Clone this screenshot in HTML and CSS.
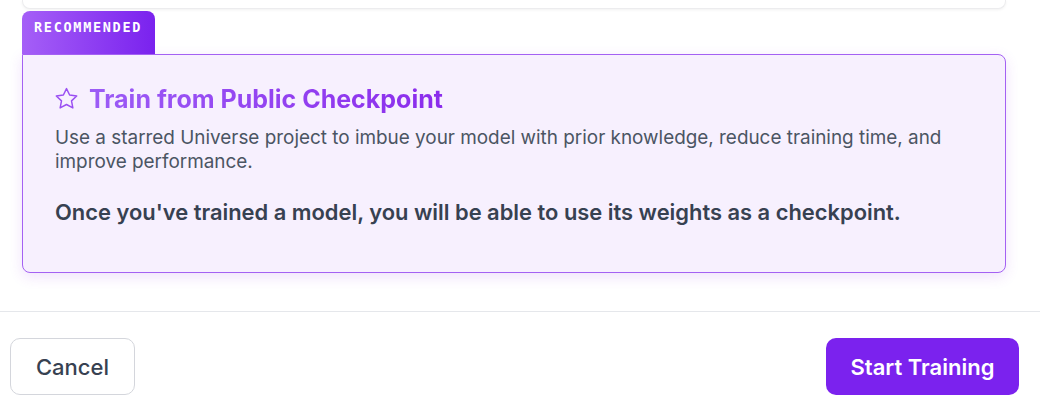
FILE: index.html
```html
<!DOCTYPE html>
<html lang="en">
<head>
    <meta charset="UTF-8">
    <meta name="viewport" content="width=device-width, initial-scale=1.0">
    <title>Start Training</title>
    <link rel="stylesheet" href="styles.css">
</head>
<body>
    <div class="options">
        <div class="prev-card"></div>

        <div class="option recommended">
            <div class="tab">RECOMMENDED</div>
            <div class="card">
                <div class="card-title">
                    <svg class="star" width="25" height="25" viewBox="0 0 24 24" fill="none" stroke="currentColor" stroke-width="1.4" stroke-linejoin="round">
                        <path d="M12 1.5l3 6.2 6.8.9-5 4.7 1.3 6.8L12 16.8l-6.1 3.3 1.3-6.8-5-4.7 6.8-.9z"/>
                    </svg>
                    <h2>Train from Public Checkpoint</h2>
                </div>
                <p class="desc">Use a starred Universe project to imbue your model with prior knowledge, reduce training time, and improve performance.</p>
                <p class="note">Once you've trained a model, you will be able to use its weights as a checkpoint.</p>
            </div>
        </div>
    </div>

    <div class="footer">
        <button class="btn btn-cancel">Cancel</button>
        <button class="btn btn-primary">Start Training</button>
    </div>
</body>
</html>
```

FILE: styles.css
```css
body {
    margin: 0;
    font-family: Inter, "Noto Sans", sans-serif;
    background-color: #fff;
    color: #374151;
}
.options {
    padding: 0 34px 0 22px;
    height: 312px;
    box-sizing: border-box;
    border-bottom: 1px solid #e5e7eb;
}
.prev-card {
    height: 9px;
    background: #fff;
    border: 1px solid #ececee;
    border-top: none;
    border-radius: 0 0 8px 8px;
    box-shadow: 0 1px 3px rgba(0, 0, 0, 0.06);
    box-sizing: border-box;
}
.recommended {
    margin-top: 2px;
}
.tab {
    display: inline-block;
    width: 133px;
    height: 43px;
    box-sizing: border-box;
    padding: 8px 0 0 12px;
    border-radius: 8px 8px 0 0;
    background: linear-gradient(90deg, #a55ff7, #7a22ee);
    color: #fff;
    font-family: "DejaVu Sans Mono", monospace;
    font-size: 13.5px;
    font-weight: bold;
    letter-spacing: 1.7px;
    vertical-align: top;
}
.card {
    height: 219px;
    box-sizing: border-box;
    padding: 29px 32px 0 32px;
    background-color: #f7f0fe;
    border: 1px solid #a461f3;
    border-radius: 0 8px 8px 8px;
    box-shadow: 0 4px 14px rgba(147, 51, 234, 0.14);
}
.card-title {
    display: flex;
    align-items: center;
    gap: 10px;
}
.star {
    color: #9a4ff2;
    margin-left: -1px;
}
.card-title h2 {
    margin: 0;
    font-size: 25px;
    line-height: 30px;
    font-weight: 700;
    background: linear-gradient(90deg, #9c5cf6, #8b2cec);
    -webkit-background-clip: text;
    background-clip: text;
    color: transparent;
}
.desc {
    margin: 12px 0 0;
    font-size: 18.9px;
    line-height: 24px;
    color: #4b5563;
}
.note {
    margin: 23px 0 0;
    font-size: 21.9px;
    line-height: 30px;
    font-weight: 600;
    color: #374151;
}
.footer {
    display: flex;
    justify-content: space-between;
    padding: 26px 21px 0 10px;
}
.btn {
    height: 57px;
    border-radius: 10px;
    font-family: Inter, "Noto Sans", sans-serif;
    font-size: 22px;
    font-weight: 500;
    cursor: pointer;
}
.btn-cancel {
    width: 125px;
    background: #fff;
    border: 1px solid #d4d6dc;
    color: #374151;
}
.btn-primary {
    width: 193px;
    background-color: #7b22ee;
    border: none;
    color: #fff;
    font-weight: 600;
}
```
